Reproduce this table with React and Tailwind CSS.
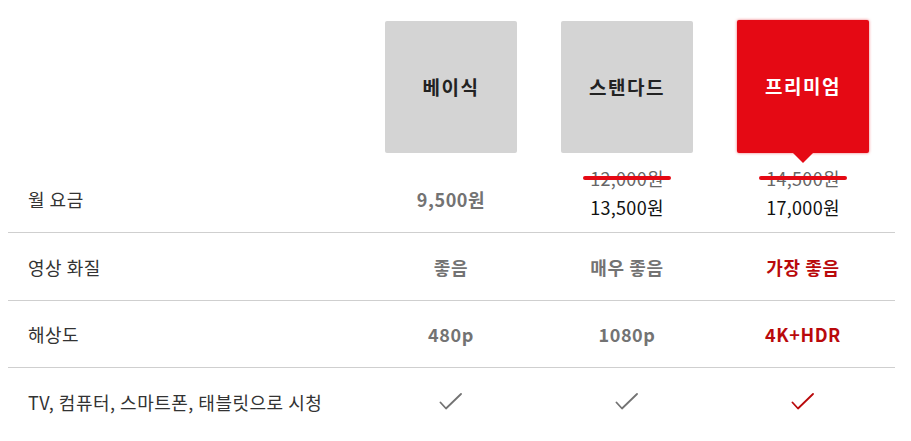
import React from "react";

const font = { fontFamily: '"Noto Sans CJK KR", "Noto Sans", sans-serif' };

function Check({ red }) {
  return (
    <svg width="24" height="18" viewBox="0 0 24 18" fill="none">
      <path
        d="M1.5 9.5 L7 15.5 L22 1"
        stroke={red ? "#b9090b" : "#737373"}
        strokeWidth="1.8"
        strokeLinecap="round"
        strokeLinejoin="round"
      />
    </svg>
  );
}

function Strike({ children }) {
  return (
    <div className="relative inline-block px-[7px]">
      <span className="text-[18px] leading-[20px] tracking-[0.3px] text-[#666]">{children}</span>
      <span className="absolute left-0 right-0 top-[9px] h-[4px] rounded-full bg-[#e50914]" />
    </div>
  );
}

function Row({ label, children, h, last }) {
  return (
    <div
      className={`grid grid-cols-[1fr_176px_176px_176px] pr-[4px] ${h} items-center ${
        last ? "" : "border-b border-[#cfcfcf]"
      }`}
    >
      <div className="pl-5 text-[18px] tracking-[0.5px] text-[#333] leading-none">{label}</div>
      {children}
    </div>
  );
}

const val = "text-center text-[18px] tracking-[0.6px] font-bold text-[#737373] leading-none";
const valRed = "text-center text-[18px] tracking-[0.6px] font-bold text-[#b9090b] leading-none";
const title = "w-[132px] h-[132px] rounded-[2px] flex items-center justify-center text-[19px] tracking-[1.5px] font-bold";

export default function App() {
  return (
    <div className="w-[911px] h-[441px] bg-white overflow-hidden" style={font}>
      <div className="ml-2 w-[887px]">
        {/* header cards */}
        <div className="grid grid-cols-[1fr_176px_176px_176px] pr-[4px] pt-[21px] h-[166px]">
          <div />
          <div className="flex justify-center">
            <div className={`${title} bg-[#d4d4d4] text-[#222]`}>베이식</div>
          </div>
          <div className="flex justify-center">
            <div className={`${title} bg-[#d4d4d4] text-[#222]`}>스탠다드</div>
          </div>
          <div className="flex justify-center">
            <div className={`${title} relative h-[133px] -mt-px bg-[#e50914] shadow-[0_0_3px_rgba(229,9,20,0.6)] text-white`}>
              프리미엄
              <span className="absolute left-1/2 -translate-x-1/2 top-full w-0 h-0 border-l-[10px] border-r-[10px] border-t-[10px] border-l-transparent border-r-transparent border-t-[#e50914]" />
            </div>
          </div>
        </div>

        <Row label="월 요금" h="h-[67px]">
          <div className={val}>9,500원</div>
          <div className="flex flex-col items-center -mt-[16px]">
            <Strike>12,000원</Strike>
            <div className="mt-[7px] text-[18px] tracking-[0.3px] text-[#111] leading-none">13,500원</div>
          </div>
          <div className="flex flex-col items-center -mt-[16px]">
            <Strike>14,500원</Strike>
            <div className="mt-[7px] text-[18px] tracking-[0.3px] text-[#111] leading-none">17,000원</div>
          </div>
        </Row>
        <Row label="영상 화질" h="h-[68px]">
          <div className={val}>좋음</div>
          <div className={val}>매우 좋음</div>
          <div className={valRed}>가장 좋음</div>
        </Row>
        <Row label="해상도" h="h-[67px]">
          <div className={val}>480p</div>
          <div className={val}>1080p</div>
          <div className={valRed}>4K+HDR</div>
        </Row>
        <Row label="TV, 컴퓨터, 스마트폰, 태블릿으로 시청" h="h-[67px]" last>
          <div className="flex justify-center"><Check /></div>
          <div className="flex justify-center"><Check /></div>
          <div className="flex justify-center"><Check red /></div>
        </Row>
      </div>
    </div>
  );
}
